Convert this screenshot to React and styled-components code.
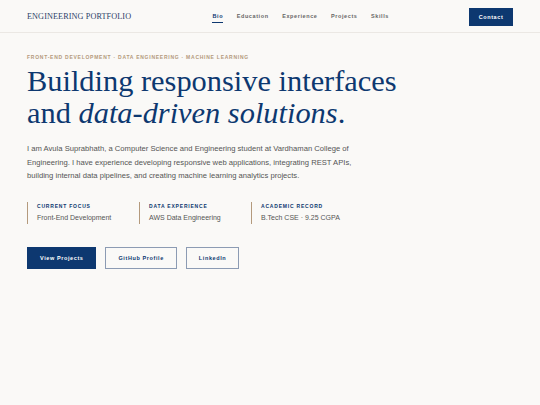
import React from 'react';
import styled, { createGlobalStyle } from 'styled-components';

const GlobalStyle = createGlobalStyle`
  html, body {
    margin: 0;
    padding: 0;
    background: #faf9f7;
  }
  body {
    font-family: "Liberation Sans", Arial, sans-serif;
    -webkit-font-smoothing: antialiased;
  }
`;

const navy = '#0d3870';
const tan = '#b49a7d';

const Header = styled.header`
  height: 33px;
  box-sizing: border-box;
  border-bottom: 1px solid #ebe8e4;
  display: flex;
  align-items: center;
  padding: 0 27px;
`;

const Logo = styled.div`
  font-family: "Liberation Serif", "Times New Roman", serif;
  font-size: 8.2px;
  color: #2c3f68;
  letter-spacing: 0.1px;
`;

const Nav = styled.nav`
  margin-left: auto;
  display: flex;
  align-items: center;
  gap: 13.5px;
  margin-right: 124px;
`;

const NavLink = styled.a`
  position: relative;
  font-size: 5.5px;
  font-weight: 700;
  letter-spacing: 0.6px;
  color: ${p => (p.$active ? navy : '#666')};
  text-decoration: none;
  &:after {
    content: '';
    display: ${p => (p.$active ? 'block' : 'none')};
    position: absolute;
    left: 0;
    right: 0;
    bottom: -4px;
    height: 1px;
    background: ${navy};
  }
`;

const ContactBtn = styled.a`
  position: absolute;
  right: 27px;
  top: 8px;
  width: 44px;
  height: 18px;
  display: flex;
  align-items: center;
  justify-content: center;
  background: ${navy};
  color: #fff;
  font-size: 5.5px;
  font-weight: 700;
  letter-spacing: 0.6px;
  text-decoration: none;
`;

const Main = styled.main`
  padding: 20px 27px 0;
`;

const Eyebrow = styled.div`
  font-size: 5px;
  font-weight: 700;
  letter-spacing: 0.75px;
  color: ${tan};
  text-transform: uppercase;
  line-height: 8px;
`;

const Title = styled.h1`
  margin: 5px 0 0;
  font-family: "Liberation Serif", "Times New Roman", serif;
  font-weight: 400;
  font-size: 30.4px;
  line-height: 31.5px;
  color: ${navy};
  em {
    font-style: italic;
  }
`;

const Intro = styled.p`
  margin: 13px 0 0;
  max-width: 335px;
  font-size: 7.65px;
  line-height: 13.5px;
  color: #555;
`;

const Stats = styled.div`
  margin-top: 19px;
  display: grid;
  grid-template-columns: repeat(3, 112px);
`;

const Stat = styled.div`
  border-left: 1px solid ${tan};
  padding-left: 9px;
  height: 22px;
  display: flex;
  flex-direction: column;
  justify-content: center;
  gap: 5px;
`;

const StatLabel = styled.div`
  font-size: 5px;
  font-weight: 700;
  letter-spacing: 0.8px;
  color: ${navy};
  line-height: 6px;
`;

const StatValue = styled.div`
  font-size: 7px;
  color: #555;
  line-height: 8px;
`;

const Actions = styled.div`
  margin-top: 23px;
  display: flex;
  gap: 9px;
`;

const Button = styled.a`
  height: 22px;
  box-sizing: border-box;
  padding: 0 12px;
  display: flex;
  align-items: center;
  justify-content: center;
  font-size: 5.5px;
  font-weight: 700;
  letter-spacing: 0.6px;
  text-decoration: none;
  border: 1px solid ${p => (p.$primary ? navy : '#8c9bb3')};
  background: ${p => (p.$primary ? navy : 'transparent')};
  color: ${p => (p.$primary ? '#fff' : navy)};
`;

const stats = [
  { label: 'Current Focus', value: 'Front-End Development' },
  { label: 'Data Experience', value: 'AWS Data Engineering' },
  { label: 'Academic Record', value: 'B.Tech CSE · 9.25 CGPA' },
];

export default function App() {
  return (
    <>
      <GlobalStyle />
      <Header>
        <Logo>ENGINEERING PORTFOLIO</Logo>
        <Nav>
          <NavLink href="#bio" $active>Bio</NavLink>
          <NavLink href="#education">Education</NavLink>
          <NavLink href="#experience">Experience</NavLink>
          <NavLink href="#projects">Projects</NavLink>
          <NavLink href="#skills">Skills</NavLink>
        </Nav>
        <ContactBtn href="#contact">Contact</ContactBtn>
      </Header>
      <Main>
        <Eyebrow>Front-End Development · Data Engineering · Machine Learning</Eyebrow>
        <Title>
          Building responsive interfaces<br />
          and <em>data-driven solutions</em>.
        </Title>
        <Intro>
          I am Avula Suprabhath, a Computer Science and Engineering student at Vardhaman College of
          Engineering. I have experience developing responsive web applications, integrating REST APIs,
          building internal data pipelines, and creating machine learning analytics projects.
        </Intro>
        <Stats>
          {stats.map(s => (
            <Stat key={s.label}>
              <StatLabel>{s.label.toUpperCase()}</StatLabel>
              <StatValue>{s.value}</StatValue>
            </Stat>
          ))}
        </Stats>
        <Actions>
          <Button href="#projects" $primary>View Projects</Button>
          <Button href="#github">GitHub Profile</Button>
          <Button href="#linkedin">LinkedIn</Button>
        </Actions>
      </Main>
    </>
  );
}
